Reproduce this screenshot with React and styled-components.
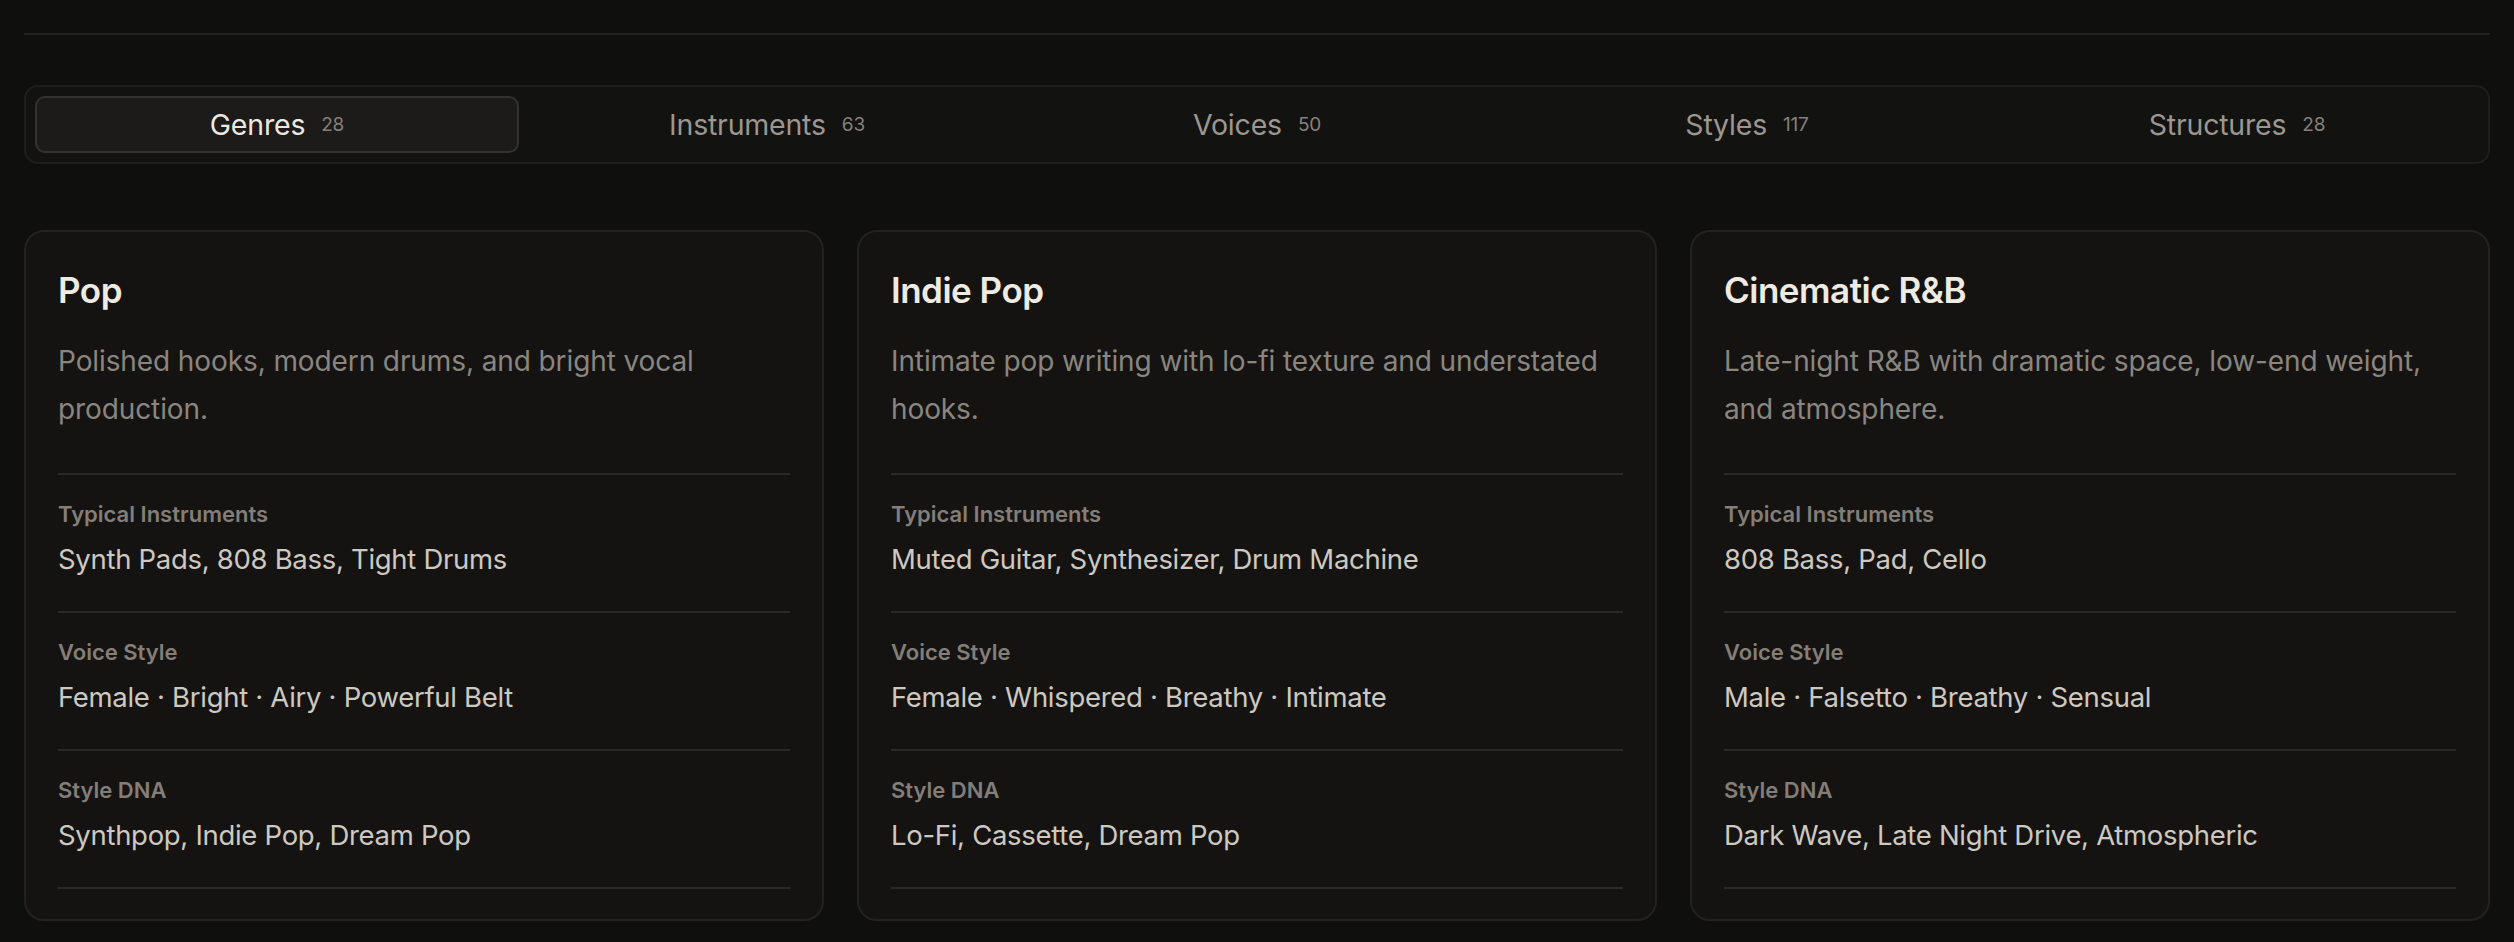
import styled, { createGlobalStyle } from "styled-components";

const GlobalStyle = createGlobalStyle`
  html, body { margin: 0; background: #0f0f0e; }
  body { font-family: Inter, "Noto Sans", sans-serif; color: #ece8e1; }
`;

const tabs = [
  { label: "Genres", count: 28 },
  { label: "Instruments", count: 63 },
  { label: "Voices", count: 50 },
  { label: "Styles", count: 117 },
  { label: "Structures", count: 28 },
];

const cards = [
  {
    title: "Pop",
    desc: "Polished hooks, modern drums, and bright vocal production.",
    rows: [
      ["Typical Instruments", "Synth Pads, 808 Bass, Tight Drums"],
      ["Voice Style", "Female · Bright · Airy · Powerful Belt"],
      ["Style DNA", "Synthpop, Indie Pop, Dream Pop"],
    ],
  },
  {
    title: "Indie Pop",
    desc: "Intimate pop writing with lo-fi texture and understated hooks.",
    rows: [
      ["Typical Instruments", "Muted Guitar, Synthesizer, Drum Machine"],
      ["Voice Style", "Female · Whispered · Breathy · Intimate"],
      ["Style DNA", "Lo-Fi, Cassette, Dream Pop"],
    ],
  },
  {
    title: "Cinematic R&B",
    desc: "Late-night R&B with dramatic space, low-end weight, and atmosphere.",
    rows: [
      ["Typical Instruments", "808 Bass, Pad, Cello"],
      ["Voice Style", "Male · Falsetto · Breathy · Sensual"],
      ["Style DNA", "Dark Wave, Late Night Drive, Atmospheric"],
    ],
  },
];

const Page = styled.div`
  padding: 33px 24px 23px 24px;
`;

const Rule = styled.div`
  height: 2px;
  background: #232220;
  margin-bottom: 50px;
`;

const TabBar = styled.div`
  display: flex;
  gap: 6px;
  padding: 9px;
  border: 2px solid #1f1e1c;
  border-radius: 14px;
  background: #121211;
  margin-bottom: 66px;
`;

const Tab = styled.div`
  flex: 1;
  height: 57px;
  display: flex;
  align-items: center;
  justify-content: center;
  gap: 16px;
  box-sizing: border-box;
  border-radius: 10px;
  border: 2px solid ${(p) => (p.$active ? "#34322f" : "transparent")};
  background: ${(p) => (p.$active ? "#1c1b1a" : "transparent")};
  font-size: 28.5px;
  letter-spacing: -0.2px;
  color: ${(p) => (p.$active ? "#ece8e1" : "#9b968f")};
`;

const Count = styled.span`
  font-size: 19px;
  color: #85807a;
`;

const Grid = styled.div`
  display: grid;
  grid-template-columns: repeat(3, 1fr);
  gap: 33px;
`;

const Card = styled.div`
  background: #141312;
  border: 2px solid #232220;
  border-radius: 20px;
  padding: 36px 32px 30px;
`;

const Title = styled.h2`
  margin: 0 0 25px;
  font-size: 35px;
  line-height: 44px;
  font-weight: 600;
  letter-spacing: -0.5px;
  color: #efeae2;
`;

const Desc = styled.p`
  margin: 0 0 40px;
  font-size: 28px;
  line-height: 48px;
  letter-spacing: -0.1px;
  color: #8a857f;
`;

const Section = styled.div`
  border-top: 2px solid #2a2927;
  padding: 24px 0 32px;
  &:last-child { border-bottom: 2px solid #2a2927; }
`;

const Label = styled.div`
  font-size: 22px;
  line-height: 30px;
  font-weight: 600;
  color: #837e78;
  margin-bottom: 10px;
`;

const Value = styled.div`
  font-size: 27.5px;
  line-height: 40px;
  letter-spacing: -0.3px;
  color: #cdc8c0;
`;

export default function App() {
  return (
    <Page>
      <GlobalStyle />
      <Rule />
      <TabBar>
        {tabs.map((t, i) => (
          <Tab key={t.label} $active={i === 0}>
            {t.label}
            <Count>{t.count}</Count>
          </Tab>
        ))}
      </TabBar>
      <Grid>
        {cards.map((c) => (
          <Card key={c.title}>
            <Title>{c.title}</Title>
            <Desc>{c.desc}</Desc>
            <div>
              {c.rows.map(([l, v]) => (
                <Section key={l}>
                  <Label>{l}</Label>
                  <Value>{v}</Value>
                </Section>
              ))}
            </div>
          </Card>
        ))}
      </Grid>
    </Page>
  );
}
